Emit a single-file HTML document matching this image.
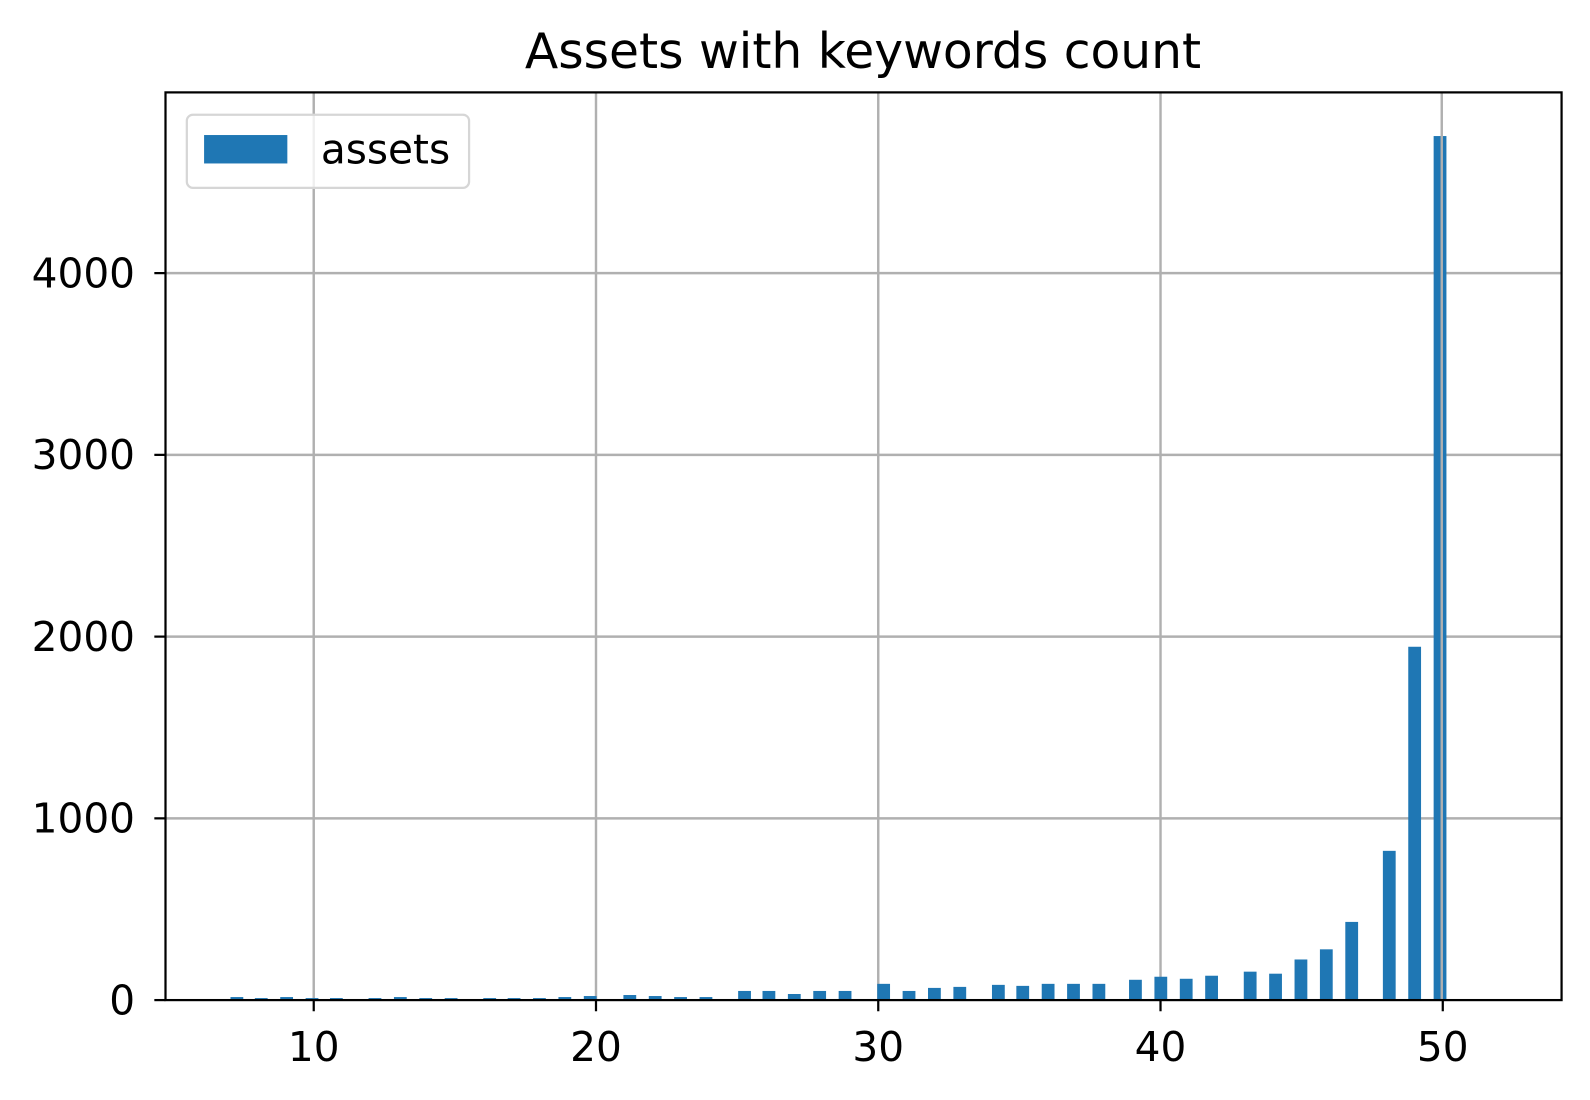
<!DOCTYPE html>
<html><head><meta charset="utf-8"><style>html,body{margin:0;padding:0;background:#fff}svg{display:block}text{font-family:"DejaVu Sans","Liberation Sans",sans-serif;fill:#000}</style></head>
<body>
<svg width="1590" height="1100" viewBox="0 0 1566 1083.4" xmlns="http://www.w3.org/2000/svg">
<rect width="1566" height="1083.4" fill="#fff"/>
<g stroke="#b0b0b0" stroke-width="2.4">
<line x1="309" y1="91" x2="309" y2="985"/><line x1="587" y1="91" x2="587" y2="985"/><line x1="865" y1="91" x2="865" y2="985"/><line x1="1143" y1="91" x2="1143" y2="985"/>
<line x1="163" y1="806" x2="1538" y2="806"/><line x1="163" y1="627" x2="1538" y2="627"/><line x1="163" y1="448" x2="1538" y2="448"/><line x1="163" y1="269" x2="1538" y2="269"/>
</g>
<g fill="#1f77b4">
<rect x="227" y="982" width="12.6" height="3"/>
<rect x="251" y="983" width="12.6" height="2"/>
<rect x="276" y="982" width="12.6" height="3"/>
<rect x="301" y="983" width="12.6" height="2"/>
<rect x="325" y="983" width="12.6" height="2"/>
<rect x="363" y="983" width="12.6" height="2"/>
<rect x="388" y="982" width="12.6" height="3"/>
<rect x="413" y="983" width="12.6" height="2"/>
<rect x="438" y="983" width="12.6" height="2"/>
<rect x="476" y="983" width="12.6" height="2"/>
<rect x="500" y="983" width="12.6" height="2"/>
<rect x="525" y="983" width="12.6" height="2"/>
<rect x="550" y="982" width="12.6" height="3"/>
<rect x="575" y="981" width="12.6" height="4"/>
<rect x="614" y="980" width="12.6" height="5"/>
<rect x="639" y="981" width="12.6" height="4"/>
<rect x="664" y="982" width="12.6" height="3"/>
<rect x="689" y="982" width="12.6" height="3"/>
<rect x="727" y="976" width="12.6" height="9"/>
<rect x="751" y="976" width="12.6" height="9"/>
<rect x="776" y="979" width="12.6" height="6"/>
<rect x="801" y="976" width="12.6" height="9"/>
<rect x="826" y="976" width="12.6" height="9"/>
<rect x="864" y="969" width="12.6" height="16"/>
<rect x="889" y="976" width="12.6" height="9"/>
<rect x="914" y="973" width="12.6" height="12"/>
<rect x="939" y="972" width="12.6" height="13"/>
<rect x="977" y="970" width="12.6" height="15"/>
<rect x="1001" y="971" width="12.6" height="14"/>
<rect x="1026" y="969" width="12.6" height="16"/>
<rect x="1051" y="969" width="12.6" height="16"/>
<rect x="1076" y="969" width="12.6" height="16"/>
<rect x="1112" y="965" width="12.6" height="20"/>
<rect x="1137" y="962" width="12.6" height="23"/>
<rect x="1162" y="964" width="12.6" height="21"/>
<rect x="1187" y="961" width="12.6" height="24"/>
<rect x="1225" y="957" width="12.6" height="28"/>
<rect x="1250" y="959" width="12.6" height="26"/>
<rect x="1275" y="945" width="12.6" height="40"/>
<rect x="1300" y="935" width="12.6" height="50"/>
<rect x="1325" y="908" width="12.6" height="77"/>
<rect x="1362" y="838" width="12.6" height="147"/>
<rect x="1387" y="637" width="12.6" height="348"/>
<rect x="1412" y="134" width="12.6" height="851"/>
</g>
<line x1="1420" y1="91" x2="1420" y2="985" stroke="#b0b0b0" stroke-width="2.4"/>
<rect x="163" y="91" width="1375" height="894" fill="none" stroke="#000" stroke-width="2.2"/>
<g stroke="#000" stroke-width="2.2">
<line x1="309" y1="985" x2="309" y2="996"/><line x1="587" y1="985" x2="587" y2="996"/><line x1="865" y1="985" x2="865" y2="996"/><line x1="1143" y1="985" x2="1143" y2="996"/><line x1="1421" y1="985" x2="1421" y2="996"/>
<line x1="152" y1="985" x2="163" y2="985"/><line x1="152" y1="806" x2="163" y2="806"/><line x1="152" y1="627" x2="163" y2="627"/><line x1="152" y1="448" x2="163" y2="448"/><line x1="152" y1="269" x2="163" y2="269"/>
</g>
<g font-size="40" text-anchor="middle">
<text x="309" y="1045">10</text><text x="587" y="1045">20</text><text x="865" y="1045">30</text><text x="1143" y="1045">40</text><text x="1421" y="1045">50</text>
</g>
<g font-size="40" text-anchor="end">
<text x="133" y="999">0</text><text x="133" y="820">1000</text><text x="133" y="641">2000</text><text x="133" y="462">3000</text><text x="133" y="283">4000</text>
</g>
<text x="850" y="67" font-size="48" text-anchor="middle">Assets with keywords count</text>
<rect x="184" y="113" width="278" height="72" rx="6" fill="#fff" fill-opacity="0.8" stroke="#d6d6d6" stroke-width="2.2"/>
<rect x="201" y="133" width="82" height="28" fill="#1f77b4"/>
<text x="316" y="161" font-size="40">assets</text>
</svg>
</body></html>
